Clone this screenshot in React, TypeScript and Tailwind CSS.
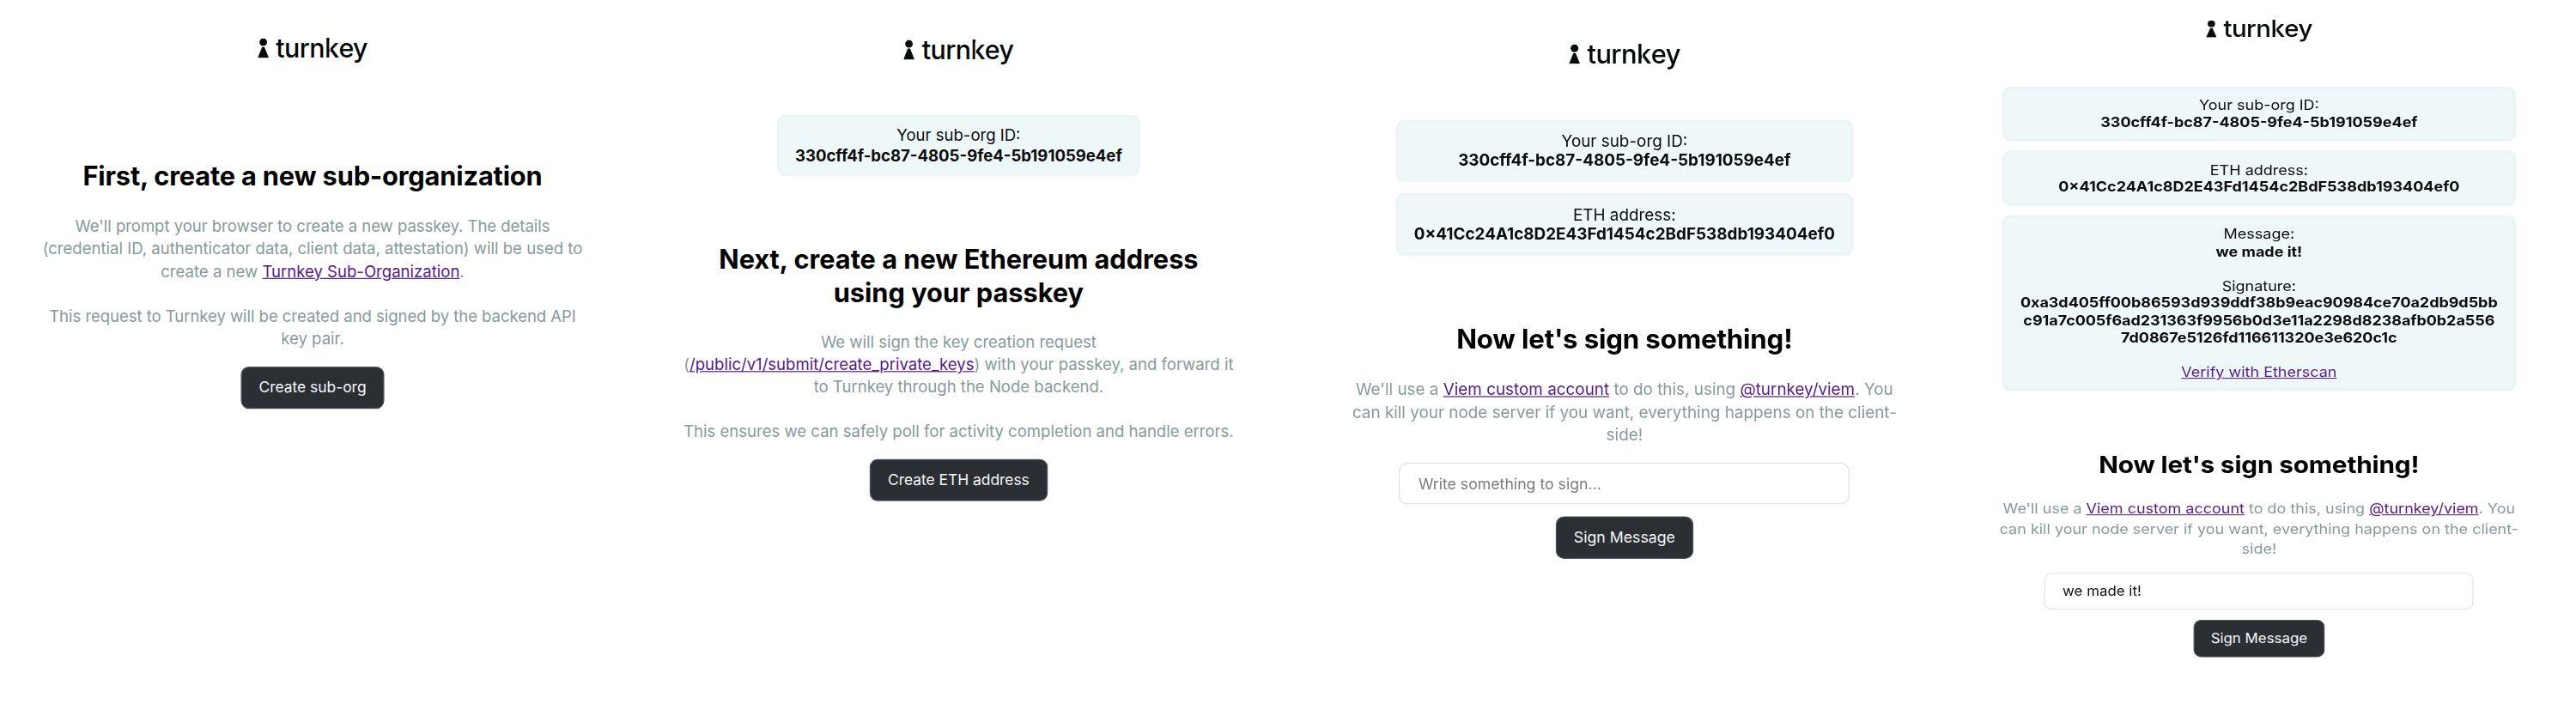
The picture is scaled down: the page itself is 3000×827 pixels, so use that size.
import type { ReactNode } from "react";

function Logo() {
  return (
    <div className="flex h-5 gap-[7.4px]">
      <svg viewBox="0 0 11 19.4" className="h-[19.4px] w-[11px]" fill="#050a0b">
        <circle cx="5.5" cy="3.8" r="3.8" />
        <path d="M4.3 8.6h2.4L11 19.4H0z" />
      </svg>
      <span className="text-[26.2px] leading-5 font-medium tracking-[-0.5px] text-[#050a0b]">
        turn
        {/* thin cut between the stem and the arms of the k */}
        <span className="relative after:absolute after:top-[0.3em] after:bottom-[0.2em] after:left-[0.175em] after:w-[0.035em] after:bg-white">
          k
        </span>
        ey
      </span>
    </div>
  );
}

function Card({ children }: { children: ReactNode }) {
  return (
    <div className="rounded-lg border border-[#e9f3f3] bg-[#eff8f9] px-[17.4px] py-[10.3px] leading-[19.45px] text-[#0c0c0c] shadow-[inset_0_0_4px_rgba(125,165,165,0.08)]">
      {children}
    </div>
  );
}

function Cards({ className, children }: { className?: string; children: ReactNode }) {
  return <div className={`mt-[54.7px] mb-[66.5px] flex flex-col gap-[11.3px] ${className ?? ""}`}>{children}</div>;
}

function Heading({ className, children }: { className: string; children: ReactNode }) {
  return <h2 className={`text-[26.5px] leading-[32.7px] font-bold text-black ${className}`}>{children}</h2>;
}

function Copy({ children }: { children: ReactNode }) {
  return <p className="mt-[22.2px] leading-[22.4px] text-[#869a9c]">{children}</p>;
}

function Link({ children }: { children: ReactNode }) {
  return (
    <a href="#" className="text-[#551a8b] underline">
      {children}
    </a>
  );
}

function Button({ className, children }: { className?: string; children: ReactNode }) {
  return (
    <button
      className={`h-[42.3px] rounded-lg border border-[#4b5458] bg-[#2b2f33] px-[17px] pt-px text-[15px] text-[#f5f7fb] ${className ?? ""}`}
    >
      {children}
    </button>
  );
}

const inputClass =
  "mt-[16.1px] mb-[11.3px] h-[41.8px] w-[445px] rounded-lg border border-[#e0e0e8] bg-white px-[18px] text-[15px] text-[#121212] placeholder:text-[#7b7b7b]";

const subOrgCard = (
  <Card>
    Your sub-org ID:
    <br />
    <b>330cff4f-bc87-4805-9fe4-5b191059e4ef</b>
  </Card>
);

const addressCard = (
  <Card>
    ETH address:
    <br />
    <b>0×41Cc24A1c8D2E43Fd1454c2BdF538db193404ef0</b>
  </Card>
);

const signCopy = (
  <>
    <Heading className="tracking-[-0.15px]">Now let's sign something!</Heading>
    <Copy>
      We'll use a <Link>Viem custom account</Link> to do this, using <Link>@turnkey/viem</Link>. You
      <br />
      can kill your node server if you want, everything happens on the client-
      <br />
      side!
    </Copy>
  </>
);

const screen = "flex shrink-0 origin-top flex-col items-center text-center text-base whitespace-nowrap";

export default function App() {
  return (
    <main className="flex h-[827px] w-[3000px] overflow-hidden bg-white font-['Inter',sans-serif]">
      <section className="flex w-[727px] justify-center">
        <div className={`${screen} scale-x-[1.16] scale-y-[1.173] pt-[38.4px]`}>
          <Logo />
          <div className="mt-[99.7px]">
            <Heading className="tracking-[-0.14px]">First, create a new sub-organization</Heading>
          </div>
          <Copy>
            <span className="tracking-[-0.04px]">We'll prompt your browser to create a new passkey. The details</span>
            <br />
            (credential ID, authenticator data, client data, attestation) will be used to
            <br />
            create a new <Link>Turnkey Sub-Organization</Link>.
            <br />
            <br />
            <span className="tracking-[-0.05px]">
              This request to Turnkey will be created and signed by the backend API
            </span>
            <br />
            key pair.
          </Copy>
          <Button className="mt-[16.3px]">Create sub-org</Button>
        </div>
      </section>

      <section className="flex w-[778px] justify-center">
        <div className={`${screen} scale-x-[1.159] scale-y-[1.165] pt-[40.3px]`}>
          <Logo />
          <Cards>{subOrgCard}</Cards>
          <Heading className="tracking-[0px]">
            Next, create a new Ethereum address
            <br />
            using your passkey
          </Heading>
          <Copy>
            We will sign the key creation request
            <br />(<Link>/public/v1/submit/create_private_keys</Link>) with your passkey, and forward it
            <br />
            to Turnkey through the Node backend.
            <br />
            <br />
            This ensures we can safely poll for activity completion and handle errors.
          </Copy>
          <Button className="mt-[16.2px]">Create ETH address</Button>
        </div>
      </section>

      <section className="flex w-[773px] justify-center">
        <div className={`${screen} scale-x-[1.179] scale-y-[1.177] pt-[43.9px]`}>
          <Logo />
          <Cards>
            {subOrgCard}
            {addressCard}
          </Cards>
          {signCopy}
          <input className={inputClass} placeholder="Write something to sign..." />
          <Button>Sign Message</Button>
        </div>
      </section>

      <section className="flex w-[706px] justify-center">
        <div className={`${screen} scale-x-[1.124] scale-y-[1.033] pt-[22.9px]`}>
          <Logo />
          <Cards className="w-[532.7px]">
            {subOrgCard}
            {addressCard}
            <Card>
              Message:
              <br />
              <b>we made it!</b>
              <br />
              <br />
              Signature:
              <br />
              <b className="tracking-[-0.04px]">
                0xa3d405ff00b86593d939ddf38b9eac90984ce70a2db9d5bb
                <br />
                c91a7c005f6ad231363f9956b0d3e11a2298d8238afb0b2a556
                <br />
                7d0867e5126fd116611320e3e620c1c
              </b>
              <br />
              <br />
              <Link>Verify with Etherscan</Link>
            </Card>
          </Cards>
          {signCopy}
          <input className={inputClass} defaultValue="we made it!" />
          <Button>Sign Message</Button>
        </div>
      </section>
    </main>
  );
}
